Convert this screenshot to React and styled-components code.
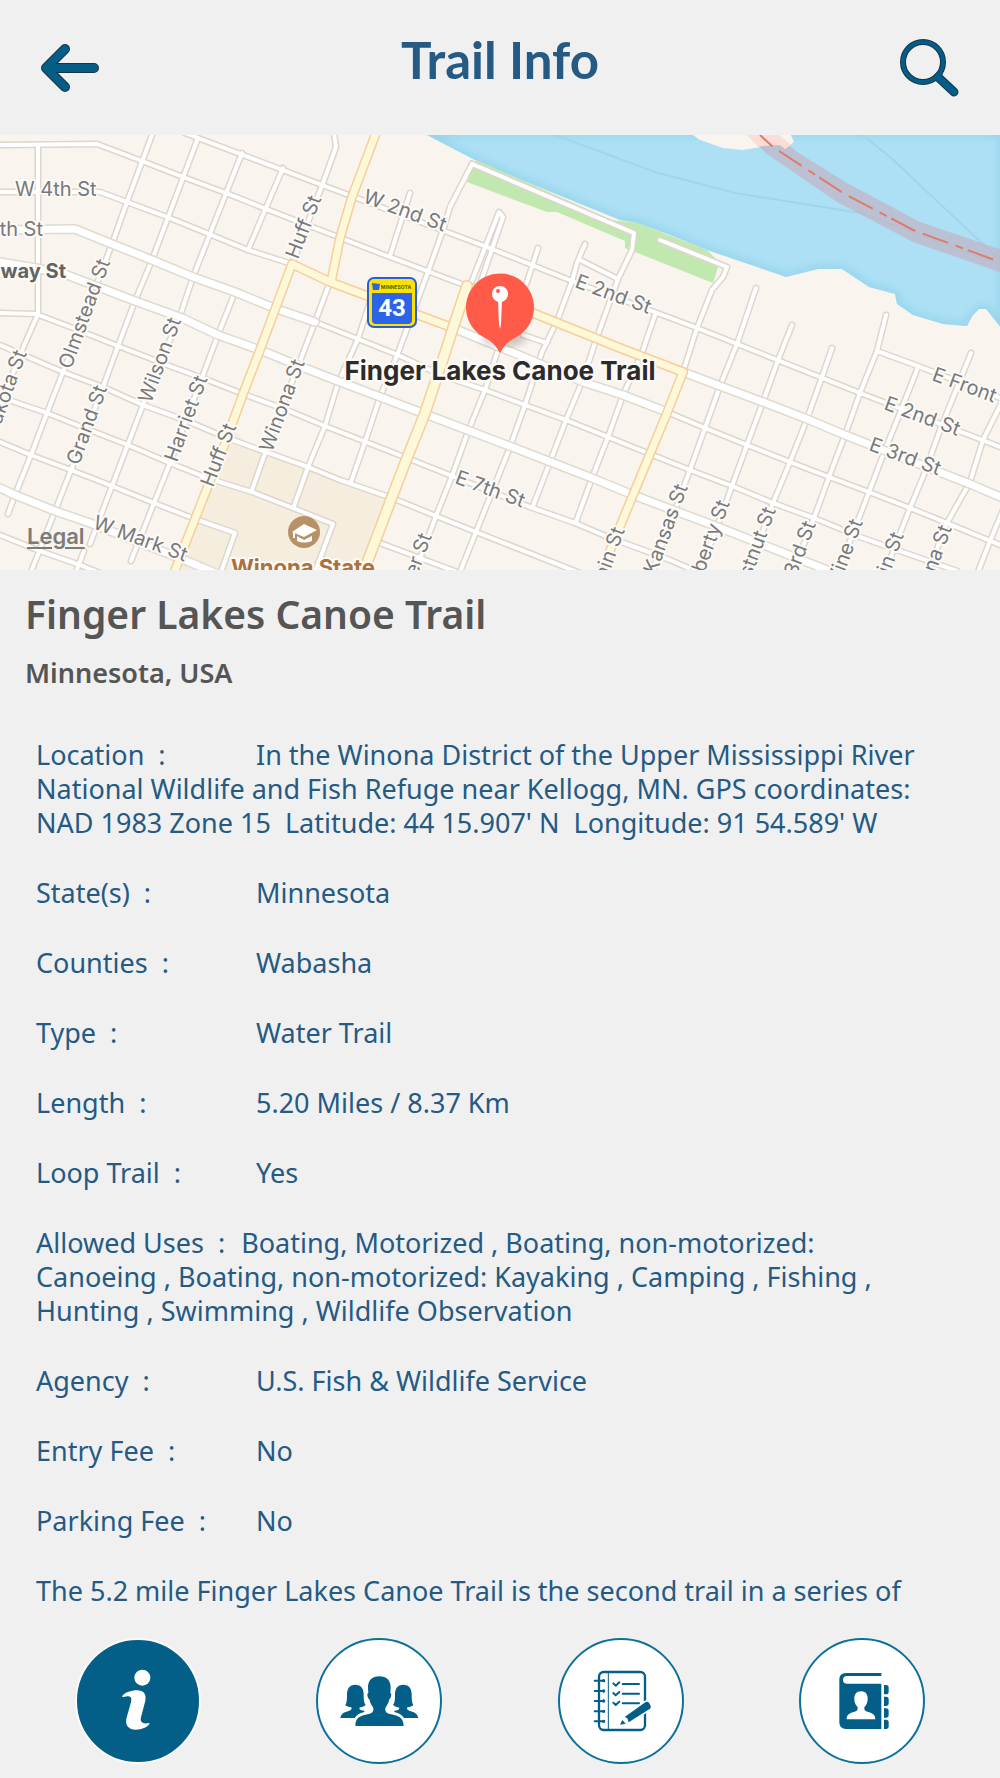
import React from "react";
import styled, { createGlobalStyle } from "styled-components";

const color = {
  page: "#f0f0f0",
  ink: "#245a84",
  deep: "#045f88",
  ring: "#0b719b",
  heading: "#555555",
};

const GlobalStyle = createGlobalStyle`
  *, *::before, *::after { box-sizing: border-box; }
  body {
    margin: 0;
    background: ${color.page};
    color: ${color.ink};
    font-family: "Noto Sans", "Open Sans", sans-serif;
  }
`;

const Screen = styled.div`
  display: flex;
  flex-direction: column;
  min-height: 100vh;
`;

const Header = styled.header`
  display: flex;
  align-items: center;
  justify-content: space-between;
  height: 135px;
  padding: 0 36px;
`;

const PageTitle = styled.h1`
  margin: 0;
  padding-bottom: 16px;
  font-family: Lato, "Noto Sans", sans-serif;
  font-size: 51px;
  line-height: 60px;
  font-weight: 700;
`;

const IconButton = styled.button`
  display: flex;
  width: 68px;
  height: 68px;
  padding: 0;
  border: 0;
  background: none;
  cursor: pointer;
`;

const MapFrame = styled.section`
  position: relative;
  overflow: hidden;
`;

const MapDrawing = styled.svg`
  display: block;
  width: 100%;
  height: auto;
  font-family: Inter, "Liberation Sans", sans-serif;
`;

const LegalLink = styled.a`
  position: absolute;
  left: 27px;
  bottom: 20px;
  color: #7b7b79;
  font: 600 22px/28px Inter, "Liberation Sans", sans-serif;
  text-decoration: underline;
  text-underline-offset: 3px;
`;

const Content = styled.main`
  flex: 1;
`;

const Heading = styled.div`
  display: flex;
  flex-direction: column;
  gap: 18px;
  padding: 20px 25px 0;
  color: ${color.heading};
`;

const TrailName = styled.h2`
  margin: 0;
  font-size: 39px;
  line-height: 48px;
  font-weight: 600;
`;

const Region = styled.p`
  margin: 0;
  font-size: 27px;
  line-height: 34px;
  font-weight: 600;
`;

const Details = styled.div`
  display: flex;
  flex-direction: column;
  gap: 36px;
  padding: 48px 68px 0 36px;
  font-size: 27px;
  line-height: 34px;
`;

const Detail = styled.p`
  margin: 0;
  white-space: pre-wrap;
`;

const DetailLabel = styled.span`
  display: inline-block;
  min-width: ${(p) => (p.$compact ? "0" : "220px")};
  padding-right: ${(p) => (p.$compact ? "16px" : "0")};
`;

const TabBar = styled.nav`
  display: grid;
  grid-template-columns: repeat(4, 1fr);
  justify-items: center;
  padding: 0 17px 14px;
`;

const Tab = styled.button`
  width: 126px;
  height: 126px;
  padding: 0;
  border: 2px solid ${(p) => (p.$active ? "#fbfbfb" : color.ring)};
  border-radius: 50%;
  background: ${(p) => (p.$active ? color.deep : "#ffffff")};
  color: ${(p) => (p.$active ? "#ffffff" : color.deep)};
  cursor: pointer;
`;

const TabIcon = styled.svg`
  display: block;
  width: 100%;
  height: 100%;
`;

const minorRoads = [
  "M185 133L198 138L330 188L487 247L572 281L697 328L860 393L1000 447",
  "M0 145L97 144L142 161L183 177L226 193L266 209L333 235L390 257L467 286",
  "M0 192H100L127 202L167 217L209 234L248 250L292 264",
  "M315 322L358 339L398 355L443 376L485 390L525 405L566 420L608 437L650 454L690 470L732 486L773 503L814 518L860 537L957 571",
  "M667 412L705 428L747 445L790 462L829 477L869 492L910 508L947 523L1000 545",
  "M0 313L36 314L73 328L118 346L167 365L205 379L243 394L287 410L325 426L366 442L407 458L452 476L530 507L575 523L608 537L670 560L700 573",
  "M0 345L63 372L103 387L143 405L187 421L227 438L252 447L308 467L340 480L392 498L436 516L476 532L580 573",
  "M0 397L47 413L87 429L128 445L170 463L207 478L252 492L293 508L333 524L315 572",
  "M0 442L31 455L71 470L112 486L154 503L195 519L235 533L221 572",
  "M0 535L40 551L80 565L100 573",
  "M380 543L457 572",
  "M523 335L547 343",
  "M580 260L618 279",
  "M877 351L918 366L1000 398",
  "M38 145V314L23 348L0 405",
  "M152 135L127 202L112 244L63 372L47 413L31 455L15 495L8 514",
  "M198 138L152 260L135 301L118 346L103 387L71 470L55 511L31 572",
  "M242 153L193 277L180 316L143 405L112 486L90 544",
  "M283 168L248 250",
  "M235 292L218 335L170 463L154 503L131 561",
  "M334 133L336 147L323 183L292 264",
  "M330 282L315 322L287 395L264 456L252 490",
  "M410 193L390 256",
  "M472 164L450 207L443 230L428 272L398 353L380 397L365 442L351 482",
  "M377 280L358 339L338 383L325 426L308 467L294 506",
  "M470 286L499 212L503 217L478 290",
  "M538 248L527 282L497 353L485 390L469 429L452 476L436 516L415 572",
  "M585 244L577 263L572 281L557 321L542 352L525 405L510 447L476 532L460 572",
  "M472 164L634 233L632 250L618 279L597 337L582 382L566 420L550 462L533 506",
  "M655 315L642 353L623 395L608 437L592 478L576 522",
  "M660 240L727 267L723 277L712 290L697 328L683 372",
  "M756 288L737 344L720 386L705 428L690 470L652 572",
  "M792 325L778 360L763 402L747 445L732 486L700 572",
  "M832 348L822 377L807 419L790 462L773 503L748 572",
  "M886 315L877 351L860 393L845 435L829 477L814 518L793 572",
  "M918 367L900 413L885 450L869 492L838 572",
  "M971 353L940 430L923 477L910 508L885 572",
  "M1003 400L983 440L970 482L947 523L928 572",
  "M1003 510L990 541L978 572",
  "M84 551L76 572",
];

const majorRoads = [
  "M0 230L75 229L112 244L152 260L193 277L235 292L274 308L315 322",
  "M0 262L36 268L67 275L135 301L182 318L218 335L260 350L302 367L338 381L425 414L512 447L592 478L633 495L718 527L827 570",
  "M453 328L507 350L583 382L623 395L667 412",
  "M683 372L720 386L763 402L807 419L845 435L970 484L1003 498",
  "M0 488L15 495L55 511L90 523L187 561L213 572",
];

const highways = [
  "M376 133L352 197L340 238L331 282",
  "M172 578L195 519L227 438L243 394L260 350L292 264L330 282L453 328",
  "M683 372L667 413L650 454L633 495L600 575",
  "M467 286L533 313L620 348L683 372",
];

const streetLabels = [
  ["W 4th St", 15, 196, 0],
  ["5th St", 43, 236, 0, "end"],
  ["Huff St", 298, 260, -69],
  ["W 2nd St", 362, 202, 20],
  ["E 2nd St", 574, 287, 20],
  ["Olmstead St", 71, 370, -70],
  ["Wilson St", 151, 404, -70],
  ["Harriet St", 177, 463, -70],
  ["Grand St", 79, 466, -70],
  ["Dakota St", 27, 353, -70, "end"],
  ["Huff St", 213, 488, -69],
  ["Winona St", 272, 453, -70],
  ["W Mark St", 92, 528, 20],
  ["E 7th St", 454, 483, 20],
  ["Center St", 432, 536, -70, "end"],
  ["Main St", 625, 530, -70, "end"],
  ["Kansas St", 688, 487, -70, "end"],
  ["Liberty St", 730, 503, -70, "end"],
  ["Chestnut St", 776, 510, -70, "end"],
  ["3rd St", 816, 524, -70, "end"],
  ["Vine St", 863, 522, -70, "end"],
  ["Franklin St", 904, 535, -70, "end"],
  ["Zumbrona St", 952, 528, -70, "end"],
  ["E Front St", 931, 380, 20],
  ["E 2nd St", 883, 409, 20],
  ["E 3rd St", 868, 450, 20],
];

const shore =
  "M423 133L450 147L473 159L507 174L620 220L637 223L670 235L707 250L760 268L786 277L818 269H842L869 287L895 294L897 304L913 315L943 324L967 326L973 315L979 309H986L1002 329V133Z";

function Roads({ paths, casing, fill, width }) {
  return (
    <g fill="none" strokeLinecap="round" strokeLinejoin="round">
      {paths.map((d) => (
        <path key={`c${d}`} d={d} stroke={casing} strokeWidth={width + 3} />
      ))}
      {paths.map((d) => (
        <path key={d} d={d} stroke={fill} strokeWidth={width} />
      ))}
    </g>
  );
}

function TrailMap() {
  return (
    <MapFrame aria-label="Map">
      <MapDrawing viewBox="0 135 1000 435">
        <defs>
          <clipPath id="river"><path d={shore} /></clipPath>
          <filter id="soft"><feGaussianBlur stdDeviation="4" /></filter>
        </defs>
        <rect y="135" width="1000" height="435" fill="#f9f4ed" />
        <path d="M233 430L252 447L392 498L362 575H173L195 519Z" fill="#f5eede" />
        <path d={shore} fill="#ade0f5" />
        <g clipPath="url(#river)">
          <path d={shore} fill="none" stroke="#93d3ea" strokeWidth="7" filter="url(#soft)" />
          <g fill="none" stroke="#9fd6ec" strokeWidth="2">
            <path d="M555 135L655 172L735 193L860 213L913 232L1000 265" />
            <path d="M860 133L890 157L1000 260" />
          </g>
        </g>
        <path d="M690 133L700 140L723 148L742 150L767 146L780 145L785 149L794 142L790 133Z" fill="#f9f4ed" />
        <path d="M745 133L767 154L837 202L913 242L1002 273V250L920 222L847 183L797 152L775 133Z" fill="#c0b4c4" fillOpacity=".7" />
        <path d="M745 133L758 146L780 145L785 149L791 145L777 133Z" fill="#fcddd5" />
        <path d="M760 135L773 147L843 193L913 230L1000 262" fill="none" stroke="#dd7c68" strokeWidth="2" strokeDasharray="27 8 27 8 8 5" strokeDashoffset="10" />
        <path d="M467 182L476 160L612 220L637 223L707 250L715 258L718 267L713 283L660 262L625 248V241L557 212H547Z" fill="#c1e8af" />
        <Roads paths={minorRoads} casing="#ddd6cc" fill="#ffffff" width={4} />
        <Roads paths={majorRoads} casing="#e0dad1" fill="#ffffff" width={7} />
        <Roads paths={highways} casing="#f7cf9b" fill="#fdf8d8" width={7} />
        <Roads paths={["M467 286L453 328L445 353L425 413L407 458L392 497L362 576"]} casing="#f7cf9b" fill="#fdf8d8" width={9} />

        <g fontSize="20" fill="#77797c" stroke="#fdfaf6" strokeWidth="4" strokeLinejoin="round" paintOrder="stroke">
          {streetLabels.map(([name, x, y, turn, anchor]) => (
            <text key={`${name}${x}`} textAnchor={anchor} transform={`translate(${x} ${y}) rotate(${turn})`}>
              {name}
            </text>
          ))}
          <text x="66" y="278" textAnchor="end" fontWeight="700" fill="#636363">Broadway St</text>
          <text x="231" y="575" fontSize="22" fontWeight="700" fill="#a8713f">Winona State</text>
        </g>

        <circle cx="304" cy="532" r="16" fill="#b99169" />
        <g fill="#fff">
          <path d="M292 532L304 524L317 530L304 537Z" />
          <path d="M297 536L304 540L312 536V541Q304 544 297 541Z" />
          <path d="M293 532H295V538H293Z" />
        </g>

        <rect x="367" y="277" width="50" height="51" rx="7" fill="#285fd8" />
        <rect x="369" y="279" width="46" height="47" rx="5" fill="#ffe100" />
        <path d="M372 293H412V320Q412 324 408 324H376Q372 324 372 320Z" fill="#2b64e8" />
        <path d="M372 283L380 284L379 290H373Z" fill="#2b64e8" />
        <text x="396" y="289" fontSize="5" fontWeight="700" textAnchor="middle" fill="#55620f">MINNESOTA</text>
        <text x="392" y="316" fontFamily="Roboto, sans-serif" fontSize="24" fontWeight="700" textAnchor="middle" fill="#fff">43</text>

        <ellipse cx="504" cy="338" rx="22" ry="8" fill="#000" opacity=".22" filter="url(#soft)" />
        <path d="M500 353C496 346 493 342 485 338A34 34 0 1 1 515 338C507 342 504 346 500 353Z" fill="#ff5b48" />
        <path d="M498 300H502L501 324L500 329L499 324Z" fill="#fff" />
        <circle cx="500" cy="294" r="8" fill="#fff" />
        <circle cx="498" cy="291" r="2" fill="#ff5b48" />
        <text x="500" y="380" textAnchor="middle" fontSize="26" fontWeight="700" fill="#2b2b2d" stroke="#fdfaf6" strokeWidth="5" strokeLinejoin="round" paintOrder="stroke">
          Finger Lakes Canoe Trail
        </text>
      </MapDrawing>
      <LegalLink href="#legal">Legal</LegalLink>
    </MapFrame>
  );
}

function BackIcon() {
  return (
    <svg viewBox="0 0 68 68" fill="none" strokeLinecap="round" strokeLinejoin="round" aria-hidden="true">
      <path d="M11 34H58M29 15L10 34L29 53" stroke="#163547" strokeWidth="10" />
      <path d="M11 34H58M29 15L10 34L29 53" stroke="#045d86" strokeWidth="8" />
    </svg>
  );
}

function SearchIcon() {
  return (
    <svg viewBox="0 0 68 68" fill="none" strokeLinecap="round" aria-hidden="true">
      <circle cx="27" cy="28" r="20" stroke="#163547" strokeWidth="6" />
      <path d="M42 43L58 58" stroke="#163547" strokeWidth="9" />
      <circle cx="27" cy="28" r="20" stroke="#045d86" strokeWidth="4" />
      <path d="M42 43L58 58" stroke="#045d86" strokeWidth="7" />
    </svg>
  );
}

function InfoIcon() {
  return (
    <TabIcon viewBox="82 60 366 366" fill="currentColor" aria-hidden="true">
      <circle cx="278" cy="173" r="24" />
      <path d="M217 230C222 218 245 211 262 211C282 211 291 222 287 242L274 292C270 308 280 313 300 309C298 320 276 329 258 329C238 329 226 316 230 296L244 246C247 234 244 230 236 229C229 229 224 232 217 230Z" />
    </TabIcon>
  );
}

const companion =
  "M918 194C935 194 943 206 943 222C943 238 943 248 949 255C944 260 936 261 930 263C930 270 936 271 945 272V276C930 280 922 285 916 294H873C876 280 885 277 898 273C906 271 908 268 906 262C898 261 892 259 888 255C893 248 893 236 893 222C893 206 901 194 918 194Z";

function PeopleIcon() {
  return (
    <TabIcon viewBox="806 60 366 366" fill="currentColor" aria-hidden="true">
      <path d={companion} />
      <path d={companion} transform="translate(1980 0) scale(-1 1)" />
      <path d="M990 169C1012 169 1025 182 1024 205L1023 219C1028 220 1026 234 1020 238C1018 250 1012 258 1008 264C1007 276 1012 280 1022 282C1050 288 1062 292 1063 318H918C919 292 930 288 958 282C968 280 973 276 972 264C968 258 962 250 960 238C954 234 952 220 957 219L956 205C955 182 968 169 990 169Z" />
    </TabIcon>
  );
}

function ChecklistIcon() {
  return (
    <TabIcon viewBox="90 60 366 366" fill="none" stroke="currentColor" strokeLinecap="round" strokeLinejoin="round" aria-hidden="true">
      <rect x="207" y="156" width="138" height="174" rx="14" strokeWidth="7" />
      <path d="M235 158V328" strokeWidth="3" />
      {[182, 213, 243, 274, 304].map((y) => (
        <g key={y}>
          <path d={`M194 ${y}H221`} strokeWidth="6" />
          <circle cx="221" cy={y} r="3" strokeWidth="4" />
        </g>
      ))}
      {[192, 221, 250].map((y) => (
        <path key={y} d={`M250 ${y - 2}L257 ${y + 5}L268 ${y - 5}M278 ${y}H327`} strokeWidth="6" />
      ))}
      <path d="M270 314L277 298L284 291L347 246Q353 243 357 248L362 257Q364 262 360 266L299 307L287 310Z" fill="#fff" stroke="#fff" strokeWidth="9" />
      <path d="M284 291L347 246Q353 243 357 248L362 257Q364 262 360 266L296 307L292 295ZM270 314L277 300L287 311Z" fill="currentColor" stroke="none" />
    </TabIcon>
  );
}

function ContactsIcon() {
  return (
    <TabIcon viewBox="815 60 366 366" fill="currentColor" aria-hidden="true">
      <path d="M1056 159H950Q930 159 930 179V307Q930 327 950 327H1056V191H953Q941 191 941 180Q941 168 953 168H1056Z" />
      {[195, 230, 265, 299].map((y) => (
        <path key={y} d={`M1064 ${y}H1070Q1078 ${y} 1078 ${y + 8}V${y + 20}Q1078 ${y + 28} 1070 ${y + 28}H1064Z`} />
      ))}
      <path d="M995 214C1009 214 1016 224 1015 238C1015 249 1010 257 1005 262C1004 270 1007 273 1014 275C1032 280 1038 284 1038 298H952C952 284 958 280 976 275C983 273 986 270 985 262C980 257 975 249 975 238C974 224 981 214 995 214Z" fill="#fff" />
    </TabIcon>
  );
}

const details = [
  ["Location  :", "In the Winona District of the Upper Mississippi River National Wildlife and Fish Refuge near Kellogg, MN. GPS coordinates: NAD 1983 Zone 15  Latitude: 44 15.907' N  Longitude: 91 54.589' W"],
  ["State(s)  :", "Minnesota"],
  ["Counties  :", "Wabasha"],
  ["Type  :", "Water Trail"],
  ["Length  :", "5.20 Miles / 8.37 Km"],
  ["Loop Trail  :", "Yes"],
  ["Allowed Uses  :", "Boating, Motorized , Boating, non-motorized: Canoeing , Boating, non-motorized: Kayaking , Camping , Fishing , Hunting , Swimming , Wildlife Observation", true],
  ["Agency  :", "U.S. Fish & Wildlife Service"],
  ["Entry Fee  :", "No"],
  ["Parking Fee  :", "No"],
];

const tabs = [
  ["Information", InfoIcon],
  ["Community", PeopleIcon],
  ["Checklist", ChecklistIcon],
  ["Contacts", ContactsIcon],
];

export default function App() {
  const [active, setActive] = React.useState("Information");
  return (
    <Screen>
      <GlobalStyle />
      <Header>
        <IconButton aria-label="Back"><BackIcon /></IconButton>
        <PageTitle>Trail Info</PageTitle>
        <IconButton aria-label="Search"><SearchIcon /></IconButton>
      </Header>
      <TrailMap />
      <Content>
        <Heading>
          <TrailName>Finger Lakes Canoe Trail</TrailName>
          <Region>Minnesota, USA</Region>
        </Heading>
        <Details>
          {details.map(([label, value, compact]) => (
            <Detail key={label}>
              <DetailLabel $compact={compact}>{label}</DetailLabel>
              {value}
            </Detail>
          ))}
          <Detail>The 5.2 mile Finger Lakes Canoe Trail is the second trail in a series of</Detail>
        </Details>
      </Content>
      <TabBar aria-label="Trail sections">
        {tabs.map(([name, Icon]) => (
          <Tab key={name} $active={name === active} aria-label={name} aria-pressed={name === active} onClick={() => setActive(name)}>
            <Icon />
          </Tab>
        ))}
      </TabBar>
    </Screen>
  );
}
